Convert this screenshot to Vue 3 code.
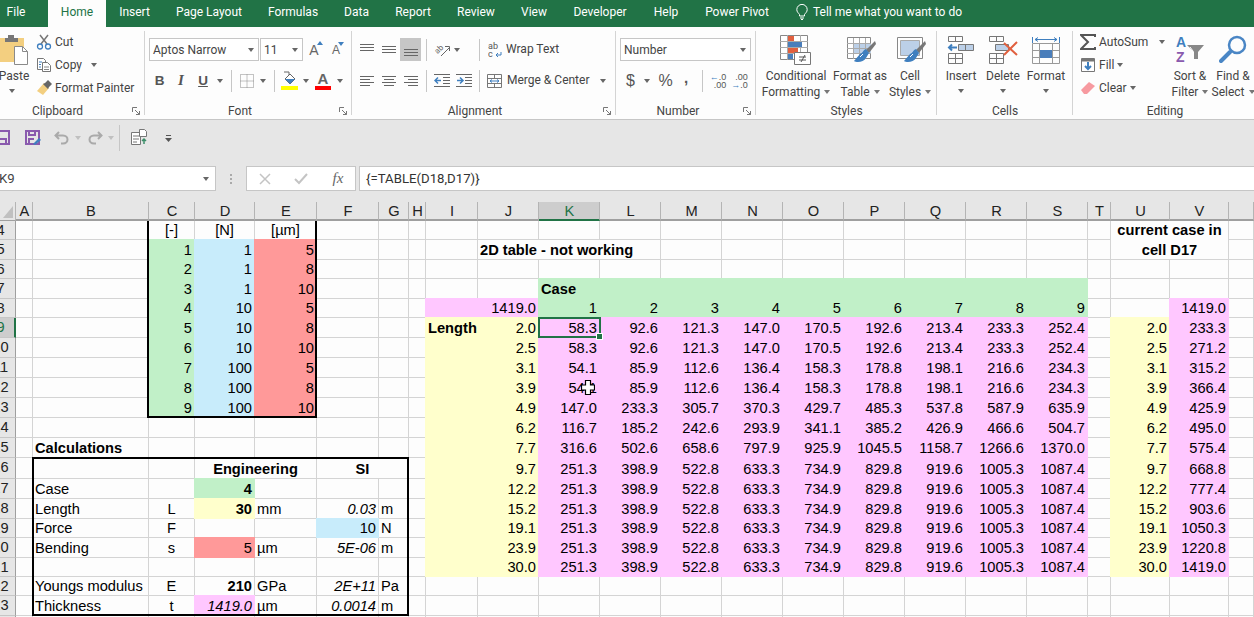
<template>
  <div class="excel">
    <div class="tabs">
      <span
        v-for="t in tabs"
        :key="t.name"
        class="tab"
        :class="{ active: t.name === 'Home' }"
        :style="{ width: t.w + 'px' }"
      >{{ t.name }}</span>
      <svg class="bulb" width="12" height="16" viewBox="0 0 12 16" fill="none" stroke="#fff">
        <path d="M3.5 10.5C2.5 9 .8 8 .8 5.6a5.2 5.2 0 0 1 10.4 0c0 2.4-1.7 3.4-2.7 4.900V12h-5zM4 14h4M5 15.500h2" />
      </svg>
      <span class="tell">Tell me what you want to do</span>
    </div>

    <div class="ribbon">
      <!-- Clipboard -->
      <section class="group g-clip">
        <div class="g-body clip-body">
          <div class="big paste">
            <svg width="28" height="33" viewBox="0 0 28 33">
              <path d="M0 3h24v24H0z" fill="#f3cf80" />
              <path d="M5 3h3V0h6v3h4v4H5z" fill="#777" />
              <path d="M14.500 11.500h8l5 5v13h-13z" fill="#fff" stroke="#8a8a8a" />
              <path d="M22.500 11.500v5h5" fill="none" stroke="#8a8a8a" />
            </svg>
            <span>Paste</span>
            <i class="caret paste-caret"></i>
          </div>
          <div class="small-col">
            <div class="small">
              <svg width="16" height="16" viewBox="0 0 16 16" fill="none">
                <path d="M5 10 12 1M11 10 4 1" stroke="#777" stroke-width="1.500" />
                <circle cx="4" cy="12.500" r="2.500" stroke="#3f7fbf" stroke-width="1.300" />
                <circle cx="12" cy="12.500" r="2.500" stroke="#3f7fbf" stroke-width="1.300" />
              </svg>
              <span>Cut</span>
            </div>
            <div class="small">
              <svg width="16" height="16" viewBox="0 0 16 16" fill="#fff" stroke="#777">
                <path d="M1.500 1.500h6l2 2v9h-8z" />
                <path d="M6.500 5.500h5l3 3v6h-8z" />
                <path d="M3 5h3M3 7.500h2M3 10h2" stroke="#3f7fbf" />
                <path d="M8 10h5M8 12.500h5" stroke="#888" />
              </svg>
              <span>Copy</span>
              <i class="caret copy-caret"></i>
            </div>
            <div class="small">
              <svg width="16" height="16" viewBox="0 0 16 16">
                <path d="M8 3 13 8 7 15 1 11z" fill="#f3cf80" />
                <path d="m9 3 3-3 4 4-3 3 -1 2-5-5z" fill="#666" />
              </svg>
              <span>Format Painter</span>
            </div>
          </div>
        </div>
        <div class="g-label">Clipboard</div>
        <svg class="launcher" width="8" height="8" viewBox="0 0 8 8" fill="none" stroke="#777">
          <path d="M.500 5V.500H5M3 3l4.500 4.500M7.500 4v3.500H4" />
        </svg>
      </section>

      <!-- Font -->
      <section class="group g-font">
        <div class="g-body">
          <div class="tool-row font-r1">
            <div class="select"><span>Aptos Narrow</span><i class="caret"></i></div>
            <div class="select"><span>11</span><i class="caret"></i></div>
            <span class="font-size-btn">A<i class="tri up"></i></span>
            <span class="font-size-btn smaller">A<i class="tri down"></i></span>
          </div>
          <div class="tool-row font-r2">
            <b class="glyph">B</b>
            <em class="glyph serif">I</em>
            <b class="glyph under">U</b>
            <i class="caret"></i>
            <i class="vsep"></i>
            <svg width="14" height="14" viewBox="0 0 14 14" fill="none" stroke="#888" stroke-dasharray="1 1">
              <path d="M.500.500h13v13H.500zM7 .500v13M.500 7h13" />
            </svg>
            <i class="caret"></i>
            <i class="vsep"></i>
            <svg width="17" height="19" viewBox="0 0 17 19">
              <path d="m4 8 5-5 5 5-5 5z" fill="#fff" stroke="#666" />
              <path d="M4 8h10l-5 5z" fill="#3f7fbf" />
              <path d="M3 1h5v3" fill="none" stroke="#666" />
              <path d="M0 15h17v4H0z" fill="#ffff00" />
            </svg>
            <i class="caret"></i>
            <span class="color-a">A<i></i></span>
            <i class="caret"></i>
          </div>
        </div>
        <div class="g-label">Font</div>
        <svg class="launcher" width="8" height="8" viewBox="0 0 8 8" fill="none" stroke="#777">
          <path d="M.500 5V.500H5M3 3l4.500 4.500M7.500 4v3.500H4" />
        </svg>
      </section>

      <!-- Alignment -->
      <section class="group g-align">
        <div class="g-body">
          <div class="tool-row align-r1">
            <svg width="14" height="14" viewBox="0 0 14 14" stroke="#666"><path d="M0 1.500h14M0 4.500h14M0 7.500h14" /></svg>
            <svg width="14" height="14" viewBox="0 0 14 14" stroke="#666"><path d="M0 3.500h14M0 6.500h14M0 9.500h14" /></svg>
            <div class="active-btn">
              <svg width="14" height="14" viewBox="0 0 14 14" stroke="#666"><path d="M0 6.500h14M0 9.500h14M0 12.500h14" /></svg>
            </div>
            <i class="vsep"></i>
            <svg width="17" height="17" viewBox="0 0 17 17" fill="none" stroke="#666">
              <text x="1" y="11" font-size="8" fill="#666" stroke="none" transform="rotate(-45 5 9)">ab</text>
              <path d="m7 15 8-8M11 5.500h4.500V10" />
            </svg>
            <i class="caret"></i>
            <span></span>
            <i class="vsep"></i>
            <svg width="14" height="16" viewBox="0 0 14 16">
              <text x="0" y="7" font-size="9" fill="#555">ab</text>
              <text x="0" y="15" font-size="9" fill="#555">c</text>
              <path d="M13 10v3H8m2-2-2 2 2 2" fill="none" stroke="#3f7fbf" />
            </svg>
            <span class="lbl">Wrap Text</span>
          </div>
          <div class="tool-row align-r2">
            <svg width="14" height="14" viewBox="0 0 14 14" stroke="#666"><path d="M0 2.500h14M0 5.500h10M0 8.500h14M0 11.500h10" /></svg>
            <svg width="14" height="14" viewBox="0 0 14 14" stroke="#666"><path d="M0 2.500h14M2 5.500h10M0 8.500h14M2 11.500h10" /></svg>
            <svg width="14" height="14" viewBox="0 0 14 14" stroke="#666"><path d="M0 2.500h14M4 5.500h10M0 8.500h14M4 11.500h10" /></svg>
            <i class="vsep"></i>
            <svg width="16" height="14" viewBox="0 0 16 14" stroke="#666" fill="none">
              <path d="M0 .500h16M9 3.500h7M9 6.500h7M9 9.500h7M0 12.500h16" />
              <path d="M7 6.500H1m3-3-3 3 3 3" stroke="#3f7fbf" stroke-width="1.500" />
            </svg>
            <svg width="16" height="14" viewBox="0 0 16 14" stroke="#666" fill="none">
              <path d="M0 .500h16M9 3.500h7M9 6.500h7M9 9.500h7M0 12.500h16" />
              <path d="M1 6.500h6m-3-3 3 3-3 3" stroke="#3f7fbf" stroke-width="1.500" />
            </svg>
            <i class="vsep"></i>
            <svg width="15" height="14" viewBox="0 0 15 14" fill="none" stroke="#777">
              <path d="M.500.500h14v13H.500zM.500 4.500h14M.500 9.500h14M7.500.500v4M7.500 9.500v4" />
              <path d="M3 7h9M3 7l2-1.500M3 7l2 1.500M12 7l-2-1.500M12 7l-2 1.500" stroke="#3f7fbf" />
            </svg>
            <span class="lbl">Merge &amp; Center</span>
            <i class="caret"></i>
          </div>
        </div>
        <div class="g-label">Alignment</div>
        <svg class="launcher" width="8" height="8" viewBox="0 0 8 8" fill="none" stroke="#777">
          <path d="M.500 5V.500H5M3 3l4.500 4.500M7.500 4v3.500H4" />
        </svg>
      </section>

      <!-- Number -->
      <section class="group g-number">
        <div class="g-body">
          <div class="tool-row number-r1">
            <div class="select"><span>Number</span><i class="caret"></i></div>
          </div>
          <div class="tool-row number-r2">
            <span class="sym">$</span>
            <i class="caret"></i>
            <span class="sym">%</span>
            <b class="sym comma">,</b>
            <i class="vsep"></i>
            <span class="dec"><u>←</u>.0<br />.00</span>
            <span class="dec">.00<br /><u>→</u>.0</span>
          </div>
        </div>
        <div class="g-label">Number</div>
        <svg class="launcher" width="8" height="8" viewBox="0 0 8 8" fill="none" stroke="#777">
          <path d="M.500 5V.500H5M3 3l4.500 4.500M7.500 4v3.500H4" />
        </svg>
      </section>

      <!-- Styles -->
      <section class="group g-styles">
        <div class="g-body big-row styles-row">
          <div class="big">
            <svg width="32" height="33" viewBox="0 0 32 33">
              <path d="M.500.500h27v24H.500z" fill="#fff" stroke="#888" />
              <path d="M7.500 0v25M20.500 0v25M0 6.500h28M0 12.500h28M0 18.500h28" stroke="#aaa" />
              <path d="M8 1h6v5H8zM8 13h10v5H8z" fill="#e1603f" />
              <path d="M8 7h14v5H8zM8 19h5v5H8z" fill="#4a7ebb" />
              <path d="M14.500 17.500h16v12h-16z" fill="#fff" stroke="#777" />
              <path d="M19 22h7M19 25h7M25 20l-4 7" stroke="#555" fill="none" />
            </svg>
            <span>Conditional</span>
            <span>Formatting<i class="caret in"></i></span>
          </div>
          <div class="big">
            <svg width="32" height="33" viewBox="0 0 32 33">
              <path d="M3.500 2.500h23v21h-23z" fill="#fff" stroke="#888" />
              <path d="M9 9h18v10H9z" fill="#bcd0e8" />
              <path d="M3 8.500h24M3 13.500h24M3 18.500h24M9.500 3v21M15.500 3v21M21.500 3v21" stroke="#aaa" />
              <path d="m31 6-9 9 3 3 7-9z" fill="#777" />
              <path d="M22 14c-3 1-3 4-6 5l-6 7c3 2 10 1 12-3l3-5z" fill="#3f7fbf" />
              <path d="m19 19-3 3" stroke="#fff" />
            </svg>
            <span>Format as</span>
            <span>Table<i class="caret in"></i></span>
          </div>
          <div class="big">
            <svg width="32" height="33" viewBox="0 0 32 33">
              <path d="M3.500 2.500h25v21h-25z" fill="#fff" stroke="#888" />
              <path d="M6.500 5.500h19v15h-19z" fill="#bcd0e8" stroke="#aaa" />
              <path d="m31 6-9 9 3 3 7-9z" fill="#777" />
              <path d="M22 14c-3 1-3 4-6 5l-6 7c3 2 10 1 12-3l3-5z" fill="#3f7fbf" />
              <path d="m19 19-3 3" stroke="#fff" />
            </svg>
            <span>Cell</span>
            <span>Styles<i class="caret in"></i></span>
          </div>
        </div>
        <div class="g-label">Styles</div>
      </section>

      <!-- Cells -->
      <section class="group g-cells">
        <div class="g-body big-row cells-row">
          <div class="big">
            <svg width="28" height="33" viewBox="0 0 28 33" fill="none" stroke="#777">
              <path d="M1.500 1.500h14v5h-14zM8.500 1.500v5M1.500 18.500h14v10h-14zM8.500 18.500v10M1.500 23.500h14" />
              <path d="M11.500 9.500h15v6h-15z" fill="#bcd0e8" stroke="#777" />
              <path d="M18.500 9.500v6" />
              <path d="M10 12.500H2m3-3-3 3 3 3" stroke="#3f7fbf" stroke-width="2" />
            </svg>
            <span>Insert</span>
            <i class="caret two"></i>
          </div>
          <div class="big">
            <svg width="30" height="33" viewBox="0 0 30 33" fill="none" stroke="#777">
              <path d="M1.500 1.500h14v5h-14zM8.500 1.500v5M1.500 18.500h14v10h-14zM8.500 18.500v10M1.500 23.500h14" />
              <path d="M7.500 9.500h13v6h-13z" fill="#bcd0e8" />
              <path d="m16 8 13 12M29 7 16 20" stroke="#e1603f" stroke-width="2" />
            </svg>
            <span>Delete</span>
            <i class="caret two"></i>
          </div>
          <div class="big">
            <svg width="28" height="33" viewBox="0 0 28 33" fill="none" stroke="#999">
              <path d="M.500 2v6M27.500 2v6M3 4.500h22M3 4.500l3-2M3 4.500l3 2M25 4.500l-3-2M25 4.500l-3 2" stroke="#3f7fbf" />
              <path d="M.500 8.500h27v20H.500zM7.500 8.500v20M20.500 8.500v20M.500 15.500h27M.500 22.500h27" />
              <path d="M8 15h12v8H8z" fill="#4a7ebb" stroke="none" />
            </svg>
            <span>Format</span>
            <i class="caret two"></i>
          </div>
        </div>
        <div class="g-label">Cells</div>
      </section>

      <!-- Editing -->
      <section class="group g-edit">
        <div class="g-body edit-body">
          <div class="small-col">
            <div class="small">
              <svg width="16" height="16" viewBox="0 0 16 16" fill="none" stroke="#555" stroke-width="2">
                <path d="M15 3V1H1l7 7-7 7h14v-2" />
              </svg>
              <span class="autosum">AutoSum</span>
              <i class="caret"></i>
            </div>
            <div class="small">
              <svg width="16" height="16" viewBox="0 0 16 16" fill="#fff" stroke="#777">
                <path d="M1.500 1.500h13v13h-13z" />
                <path d="M2 2h12v2H2z" fill="#777" />
                <path d="M8 5v7m-3-3 3 3 3-3" fill="none" stroke="#3f7fbf" stroke-width="2" />
              </svg>
              <span>Fill</span>
              <i class="caret tight"></i>
            </div>
            <div class="small">
              <svg width="16" height="16" viewBox="0 0 16 16">
                <path d="m1 10 8-8 6 4-8 8H4z" fill="#f79aa0" />
              </svg>
              <span>Clear</span>
              <i class="caret tight"></i>
            </div>
          </div>
          <div class="big">
            <svg width="32" height="33" viewBox="0 0 32 33">
              <text x="2" y="12" font-size="14" font-weight="700" fill="#3f7fbf" font-family="Liberation Sans, sans-serif">A</text>
              <text x="2" y="27" font-size="14" font-weight="700" fill="#8a5aae" font-family="Liberation Sans, sans-serif">Z</text>
              <path d="M13 10h17l-6 7v7h-4v-7z" fill="#888" />
              <path d="m16 12 3 4v6" stroke="#fff" fill="none" />
            </svg>
            <span>Sort &amp;</span>
            <span>Filter<i class="caret in"></i></span>
          </div>
          <div class="big">
            <svg width="28" height="33" viewBox="0 0 28 33" fill="none" stroke="#4a86c5">
              <circle cx="18" cy="10" r="8" stroke-width="2.500" />
              <path d="m11 17-9 9" stroke-width="4" stroke-linecap="round" />
            </svg>
            <span>Find &amp;</span>
            <span>Select<i class="caret in"></i></span>
          </div>
        </div>
        <div class="g-label">Editing</div>
      </section>
    </div>

    <div class="qat">
      <svg class="q-save-a" width="10" height="15" viewBox="0 0 10 15" fill="none" stroke="#8a5aae" stroke-width="2">
        <path d="M-2 1h11v13H-2M0 9h6v5" />
      </svg>
      <svg class="q-save-b" width="16" height="15" viewBox="0 0 16 15" fill="none" stroke="#8a5aae" stroke-width="2">
        <path d="M1 1h13v13H1zM4 1v4h6V1M4 14V9h5" />
        <path d="m8 14 6-6 2 2-6 5z" fill="#3f7fbf" stroke="none" />
      </svg>
      <svg class="q-undo" width="16" height="14" viewBox="0 0 16 14" fill="none" stroke="#aaa" stroke-width="2">
        <path d="M5 1 1.500 4.500 5 8M2 4.500h7c6 0 6 8 0 8H7" />
      </svg>
      <i class="caret q-caret"></i>
      <svg class="q-redo" width="16" height="14" viewBox="0 0 16 14" fill="none" stroke="#aaa" stroke-width="2">
        <path d="M11 1l3.500 3.500L11 8M14 4.500H7c-6 0-6 8 0 8h2" />
      </svg>
      <i class="caret q-caret"></i>
      <i class="vsep q-sep"></i>
      <svg class="q-form" width="18" height="17" viewBox="0 0 18 17" fill="#fff" stroke="#777">
        <path d="M1.500 4.500h9v12h-9z" />
        <path d="M9.500 1.500h5l2 2v5h-7z" />
        <path d="M3 8h6M3 11h6M3 14h4" />
        <path d="M14 16v-5m-2 2 2-2 2 2" stroke="#3d8f6a" fill="none" stroke-width="1.500" />
      </svg>
      <svg class="q-more" width="7" height="8" viewBox="0 0 7 8">
        <path d="M1 0h5v1H1z" fill="#555" /><path d="M0 3h7L3.500 7z" fill="#555" />
      </svg>
    </div>

    <div class="formula-bar">
      <div class="name-box"><span>K9</span><i class="caret"></i></div>
      <div class="dots"><i></i><i></i><i></i></div>
      <div class="fx-box">
        <svg width="12" height="12" viewBox="0 0 12 12" stroke="#c4c4c4" stroke-width="1.500"><path d="m1 1 10 10M11 1 1 11" /></svg>
        <svg width="14" height="12" viewBox="0 0 14 12" fill="none" stroke="#c4c4c4" stroke-width="2"><path d="m1 6 4 4 8-9" /></svg>
        <em class="fx">fx</em>
      </div>
      <div class="formula">{=TABLE(D18,D17)}</div>
    </div>

    <div class="sheet">
      <div class="corner"><i></i></div>
      <div
        v-for="(c, i) in cols"
        :key="'h' + c"
        class="col-head"
        :class="{ sel: c === 'K' }"
        :style="{ gridColumn: i + 2, gridRow: 1 }"
      >{{ c }}</div>
      <div
        v-for="(r, i) in rows"
        :key="'r' + r"
        class="row-head"
        :class="{ sel: r === 9 }"
        :style="{ gridColumn: 1, gridRow: i + 2 }"
      ><span>{{ r }}</span></div>
      <div
        v-for="cell in cells"
        :key="cell.key"
        class="cell"
        :class="cell.cls"
        :style="cell.pos"
      ><span>{{ cell.text }}</span></div>
      <div class="thick box-params"></div>
      <div class="thick box-calc"></div>
      <div class="active-cell"><i></i></div>
      <svg class="cursor" width="14" height="15" viewBox="0 0 14 15">
        <path d="M4.500.500h5v4.500h4v5h-4v4.500h-5V10h-4V5h4z" fill="#fff" stroke="#000" stroke-width="1.200" />
      </svg>
    </div>
  </div>
</template>

<script setup>
const tabs = [
  { name: 'File', w: 32 }, { name: 'Home', w: 58 }, { name: 'Insert', w: 57 },
  { name: 'Page Layout', w: 92 }, { name: 'Formulas', w: 76 }, { name: 'Data', w: 51 },
  { name: 'Report', w: 62 }, { name: 'Review', w: 64 }, { name: 'View', w: 52 },
  { name: 'Developer', w: 80 }, { name: 'Help', w: 52 }, { name: 'Power Pivot', w: 90 }
]

const cols = 'ABCDEFGHIJKLMNOPQRSTUV'.split('').concat('')
const rows = Array.from({ length: 21 }, (_, i) => i + 4)

const caseRows = [
  [58.3, 92.6, 121.3, 147.0, 170.5, 192.6, 213.4, 233.3, 252.4],
  [58.3, 92.6, 121.3, 147.0, 170.5, 192.6, 213.4, 233.3, 252.4],
  [54.1, 85.9, 112.6, 136.4, 158.3, 178.8, 198.1, 216.6, 234.3],
  [54.1, 85.9, 112.6, 136.4, 158.3, 178.8, 198.1, 216.6, 234.3],
  [147.0, 233.3, 305.7, 370.3, 429.7, 485.3, 537.8, 587.9, 635.9],
  [116.7, 185.2, 242.6, 293.9, 341.1, 385.2, 426.9, 466.6, 504.7],
  [316.6, 502.6, 658.6, 797.9, 925.9, 1045.5, 1158.7, 1266.6, 1370.0]
]
const flatRow = [251.3, 398.9, 522.8, 633.3, 734.9, 829.8, 919.6, 1005.3, 1087.4]
const lengths = [2.0, 2.5, 3.1, 3.9, 4.9, 6.2, 7.7, 9.7, 12.2, 15.2, 19.1, 23.9, 30.0]
const current = [233.3, 271.2, 315.2, 366.4, 425.9, 495.0, 575.4, 668.8, 777.4, 903.6, 1050.3, 1220.8, 1419.0]

const data = {}
const put = (ref, text, cls = '', span) => { data[ref] = { text, cls, span } }

// parameter table
put('C4', '[-]', 'c')
put('D4', '[N]', 'c')
put('E4', '[µm]', 'c')
const forces = [1, 1, 1, 10, 10, 10, 100, 100, 100]
const bends = [5, 8, 10, 5, 8, 10, 5, 8, 10]
forces.forEach((f, i) => {
  put('C' + (i + 5), i + 1, 'r green')
  put('D' + (i + 5), f, 'r blue')
  put('E' + (i + 5), bends[i], 'r red')
})

// calculations block
put('B15', 'Calculations', 'b')
put('D16', 'Engineering', 'b c', [2, 1])
put('F16', 'SI', 'b c', [2, 1])
put('B17', 'Case')
put('D17', 4, 'r b green')
put('B18', 'Length')
put('C18', 'L', 'c')
put('D18', 30, 'r b yellow')
put('E18', 'mm')
put('F18', '0.03', 'r i')
put('G18', 'm')
put('B19', 'Force')
put('C19', 'F', 'c')
put('F19', 10, 'r blue')
put('G19', 'N')
put('B20', 'Bending')
put('C20', 's', 'c')
put('D20', 5, 'r red')
put('E20', 'µm')
put('F20', '5E-06', 'r i')
put('G20', 'm')
put('B22', 'Youngs modulus')
put('C22', 'E', 'c')
put('D22', 210, 'r b')
put('E22', 'GPa')
put('F22', '2E+11', 'r i')
put('G22', 'Pa')
put('B23', 'Thickness')
put('C23', 't', 'c')
put('D23', '1419.0', 'r i pink')
put('E23', 'µm')
put('F23', '0.0014', 'r i')
put('G23', 'm')

// 2D table
const caseCols = 'KLMNOPQRS'.split('')
put('J5', '2D table - not working', 'b', [3, 1])
put('U4', 'current case in cell D17', 'b wrap', [2, 2])
caseCols.forEach((c, i) => {
  put(c + 7, i === 0 ? 'Case' : '', 'b green')
  put(c + 8, i + 1, 'r green')
})
put('I8', '', 'pink')
put('J8', '1419.0', 'r pink')
put('V8', '1419.0', 'r pink')
lengths.forEach((len, i) => {
  const r = i + 9
  const vals = i < caseRows.length ? caseRows[i] : flatRow
  put('I' + r, i === 0 ? 'Length' : '', i === 0 ? 'b yellow' : 'yellow')
  put('J' + r, len.toFixed(1), 'r yellow')
  caseCols.forEach((c, j) => put(c + r, vals[j].toFixed(1), 'r pink'))
  put('U' + r, len.toFixed(1), 'r yellow')
  put('V' + r, current[i].toFixed(1), 'r pink')
})

const cells = []
const covered = new Set()
rows.forEach((r, ri) => {
  cols.forEach((c, ci) => {
    const ref = (c || 'W') + r
    if (covered.has(ci + ':' + ri)) return
    const d = data[ref] || { text: '', cls: '' }
    const [sc, sr] = d.span || [1, 1]
    for (let x = 0; x < sc; x++) {
      for (let y = 0; y < sr; y++) covered.add((ci + x) + ':' + (ri + y))
    }
    cells.push({
      key: ref,
      text: d.text,
      cls: d.cls,
      pos: { gridColumn: `${ci + 2} / span ${sc}`, gridRow: `${ri + 2} / span ${sr}` }
    })
  })
})
</script>

<style scoped>
.excel {
  width: 1254px;
  height: 617px;
  overflow: hidden;
  background: #e6e6e6;
  font-family: Roboto, "Liberation Sans", sans-serif;
  font-size: 12px;
  color: #444;
}

/* title tabs */
.tabs {
  display: flex;
  align-items: center;
  height: 27px;
  background: #217346;
  color: #fff;
}
.tab {
  height: 27px;
  line-height: 24px;
  text-align: center;
  flex-shrink: 0;
}
.tab:first-child { margin-right: 16px; }
.tab.active { background: #fdfdfd; color: #217346; }
.bulb { margin: 0 5px 3px 14px; flex-shrink: 0; }
.tell { line-height: 24px; height: 27px; white-space: nowrap; }

/* ribbon */
.ribbon {
  display: flex;
  height: 93px;
  background: #fdfdfd;
  border-bottom: 1px solid #c6c6c6;
  box-sizing: border-box;
  overflow: hidden;
}
.group { position: relative; flex-shrink: 0; height: 92px; }
.group::after {
  content: "";
  position: absolute;
  top: 4px;
  bottom: 4px;
  right: 0;
  width: 1px;
  background: #d4d4d4;
}
.g-clip { width: 145px; }
.g-font { width: 207px; padding-left: 4px; box-sizing: border-box; }
.g-align { width: 264px; padding-left: 4px; box-sizing: border-box; }
.g-number { width: 140px; padding-left: 4px; box-sizing: border-box; }
.g-styles { width: 181px; }
.g-cells { width: 136px; padding-left: 3px; box-sizing: border-box; }
.g-edit { width: 181px; padding-left: 7px; box-sizing: border-box; }
.g-edit::after { display: none; }

.g-body { height: 76px; box-sizing: border-box; }
.g-label {
  position: absolute;
  left: 0;
  right: 0;
  top: 76px;
  line-height: 16px;
  text-align: center;
}
.g-clip .g-label { right: 30px; }
.g-font .g-label { right: 17px; }
.g-align .g-label { right: 18px; }
.g-number .g-label { right: 16px; }
.g-edit .g-label { left: 3px; }
.launcher { position: absolute; right: 5px; top: 80px; }

.caret {
  display: inline-block;
  width: 0;
  height: 0;
  border-left: 3.500px solid transparent;
  border-right: 3.500px solid transparent;
  border-top: 4px solid #666;
  justify-self: center;
  flex-shrink: 0;
}
.caret.in { margin-left: 4px; vertical-align: 2px; border-top-color: #777; }
.caret.two { margin-top: 5px; }
.caret.tight { margin-left: 3px; }

.vsep {
  display: block;
  width: 1px;
  height: 22px;
  background: #c6c6c6;
  justify-self: center;
}

.tool-row {
  display: grid;
  align-items: center;
  justify-items: center;
  height: 23px;
}
.select {
  display: flex;
  align-items: center;
  justify-content: space-between;
  justify-self: stretch;
  height: 23px;
  box-sizing: border-box;
  padding: 0 4px 0 3px;
  border: 1px solid #c6c6c6;
  background: #fff;
}

/* clipboard */
.clip-body { display: flex; }
.big {
  display: flex;
  flex-direction: column;
  align-items: center;
  line-height: 16px;
  white-space: nowrap;
  padding-top: 8px;
}
.big svg { flex-shrink: 0; }
.paste { width: 28px; margin-right: 8px; }
.paste-caret { margin-top: 5px; margin-left: -5px; }
.small-col { padding-top: 3px; flex-shrink: 0; }
.small {
  display: flex;
  align-items: center;
  height: 23px;
  white-space: nowrap;
}
.small svg { margin-right: 3px; flex-shrink: 0; }
.copy-caret { margin-left: 9px; }

/* font */
.font-r1 { grid-template-columns: 110px 43px 20px 22px; column-gap: 1px; margin-top: 11px; }
.font-r2 { grid-template-columns: 21px 22px 22px 12px 10px 21px 12px 10px 21px 12px 22px 12px; margin-top: 8px; }
.font-size-btn {
  position: relative;
  font-size: 14px;
  font-family: "Liberation Sans", sans-serif;
  color: #666;
}
.font-size-btn.smaller { font-size: 12px; }
.tri { position: absolute; right: -4px; top: -1px; width: 0; height: 0; border-left: 3px solid transparent; border-right: 3px solid transparent; }
.tri.up { border-bottom: 4px solid #3f7fbf; }
.tri.down { border-top: 4px solid #3f7fbf; }
.glyph { font-size: 13.500px; color: #555; font-family: "Liberation Sans", sans-serif; margin-top: -1px; }
.glyph.serif { font-family: "Liberation Serif", serif; font-size: 15px; font-weight: 700; }
.glyph.under { text-decoration: underline; }
.color-a {
  display: flex;
  flex-direction: column;
  align-items: center;
  font: bold 15px/15px "Liberation Sans", sans-serif;
  color: #666;
}
.color-a i { display: block; width: 16px; height: 4px; background: #f00; }

/* alignment */
.align-r1 { grid-template-columns: 22px 22px 21px 10px 22px 8px 13px 10px 21px auto; justify-content: start; margin-top: 11px; }
.align-r2 { grid-template-columns: 22px 22px 21px 10px 22px 22px 8px 23px 85px 24px; justify-content: start; margin-top: 8px; }
.lbl { justify-self: start; padding-left: 1px; white-space: nowrap; margin-top: -2px; }
.active-btn {
  display: flex;
  align-items: center;
  justify-content: center;
  justify-self: stretch;
  height: 23px;
  background: #c6c6c6;
}

/* number */
.number-r1 { grid-template-columns: 131px; margin-top: 11px; }
.number-r2 { grid-template-columns: 21px 12px 25px 16px 16px 16px 2px 23px; margin-top: 8px; }
.number-r2 .dec:last-child { grid-column: 8; }
.sym { font-size: 16px; color: #555; font-family: "Liberation Sans", sans-serif; }
.comma { margin-top: -6px; font-size: 15px; }
.dec { font: 9px/8px "Liberation Sans", sans-serif; color: #555; white-space: nowrap; text-align: right; }
.dec u { color: #3f7fbf; text-decoration: none; font-weight: 700; }

.big-row { display: grid; justify-items: center; }
.styles-row { grid-template-columns: 80px 48px 52px; }
.cells-row { grid-template-columns: 42px 42px 44px; }
.edit-body { display: flex; }
.edit-body .small-col { width: 88px; }
.edit-body .big:nth-child(2) { width: 44px; }
.edit-body .big:nth-child(3) { width: 42px; }
.autosum { margin-right: 10px; min-width: 50px; }

/* quick access toolbar */
.qat {
  display: flex;
  align-items: center;
  height: 35px;
  background: #e6e6e6;
}
.q-save-b { margin-left: 15px; }
.q-undo { margin-left: 13px; }
.q-caret { border-top-color: #c0c0c0; margin-left: 5px; }
.q-redo { margin-left: 6px; }
.q-sep { margin-left: 5px; height: 26px; }
.q-form { margin-left: 10px; margin-bottom: 3px; }
.q-more { margin-left: 17px; margin-top: 2px; }

/* formula bar */
.formula-bar {
  display: flex;
  height: 36px;
  box-sizing: border-box;
  padding-top: 11px;
  background: #e6e6e6;
}
.name-box, .fx-box, .formula {
  height: 25px;
  box-sizing: border-box;
  background: #fff;
  border: 1px solid #c6c6c6;
  font-size: 13.200px;
  line-height: 23px;
}
.name-box {
  display: flex;
  align-items: center;
  justify-content: space-between;
  width: 216px;
  padding-right: 6px;
  border-left: 0;
  overflow: hidden;
}
.name-box span { margin-left: -1px; }
.dots {
  display: flex;
  flex-direction: column;
  justify-content: center;
  align-items: center;
  gap: 2px;
  width: 30px;
  height: 25px;
}
.dots i { width: 2px; height: 2px; background: #aaa; }
.fx-box {
  display: grid;
  grid-template-columns: 36px 36px 38px;
  justify-items: center;
  align-items: center;
  width: 110px;
}
.fx { font: italic 15px "Liberation Serif", serif; color: #666; }
.formula {
  flex: 1;
  margin-left: 3px;
  padding-left: 6px;
  border-right: 0;
  color: #333;
  white-space: nowrap;
}

/* sheet */
.sheet {
  position: relative;
  display: grid;
  grid-template-columns: 16px 17px 116px 46px 60px 62px 62px 30px 17px 52px repeat(10, 61px) 23px 59px 59px 25px;
  grid-template-rows: 19px 19px 20px 19px 20px 19px 20px 20px 20px 20px 20px 20px 20px 21px 20px 20px 19px 20px 19px 19px 20px 2px;
  background: #fdfdfd;
  margin-top: 11px;
  font: 14.670px "Liberation Sans", sans-serif;
  color: #000;
}
.corner {
  grid-column: 1;
  grid-row: 1;
  background: #e6e6e6;
  border-right: 1px solid #b4b4b4;
  border-bottom: 1px solid #9f9f9f;
  position: relative;
}
.corner i {
  position: absolute;
  right: 2px;
  bottom: 2px;
  width: 0;
  height: 0;
  border-left: 10px solid transparent;
  border-bottom: 12px solid #c0c0c0;
}
.col-head {
  display: flex;
  align-items: center;
  justify-content: center;
  box-sizing: border-box;
  padding-left: 1px;
  background: #e6e6e6;
  border-right: 1px solid #b4b4b4;
  border-bottom: 2px solid #9f9f9f;
  color: #222;
}
.col-head.sel { background: #cdcdcd; color: #217346; border-bottom-color: #217346; }
.row-head {
  overflow: hidden;
  background: #e6e6e6;
  box-sizing: border-box;
  border-right: 1px solid #9f9f9f;
  border-bottom: 1px solid #c6c6c6;
  color: #222;
  line-height: 18px;
}
.row-head span { display: block; width: 31px; margin-left: -15px; text-align: center; }
.row-head.sel { background: #cdcdcd; color: #217346; border-right: 2px solid #217346; }

.cell {
  display: flex;
  align-items: flex-end;
  box-sizing: border-box;
  min-width: 0;
  padding: 0 2px;
  border-right: 1px solid #d4d4d4;
  border-bottom: 1px solid #d4d4d4;
  line-height: 18px;
  white-space: nowrap;
}
.r { justify-content: flex-end; }
.c { justify-content: center; }
.b { font-weight: 700; }
.i { font-style: italic; }
.green, .blue, .red, .yellow, .pink {
  position: relative;
  margin: -1px 0 0 -1px;
  padding-left: 3px;
  border-color: transparent;
}
.green { background: #c1f0c8; }
.blue { background: #c8ecfb; }
.red { background: #ff9999; }
.yellow { background: #ffffcc; }
.pink { background: #ffc7ff; }
.wrap {
  white-space: normal;
  text-align: center;
  line-height: 20px;
  justify-content: center;
  border-bottom: 0;
  box-shadow: inset 0 -1px 0 #d4d4d4;
}

.thick { position: relative; border: 2px solid #000; box-sizing: border-box; pointer-events: none; }
.box-params { grid-column: 4 / 7; grid-row: 2 / 12; margin-left: -2px; border-top: 0; }
.box-calc { grid-column: 3 / 9; grid-row: 14 / 22; margin: -1px 0 0 -1px; }
.active-cell {
  position: relative;
  grid-column: 12;
  grid-row: 7;
  margin: -1px -1px 0 -1px;
  border: 2px solid #217346;
  box-sizing: border-box;
}
.active-cell i {
  position: absolute;
  right: -3px;
  bottom: -3px;
  width: 5px;
  height: 5px;
  background: #217346;
  border: 1px solid #fff;
  box-sizing: content-box;
  margin: -1px;
}
.cursor { position: absolute; left: 581px; top: 178px; }
</style>

<style>
html, body { margin: 0; overflow: hidden; }
</style>
